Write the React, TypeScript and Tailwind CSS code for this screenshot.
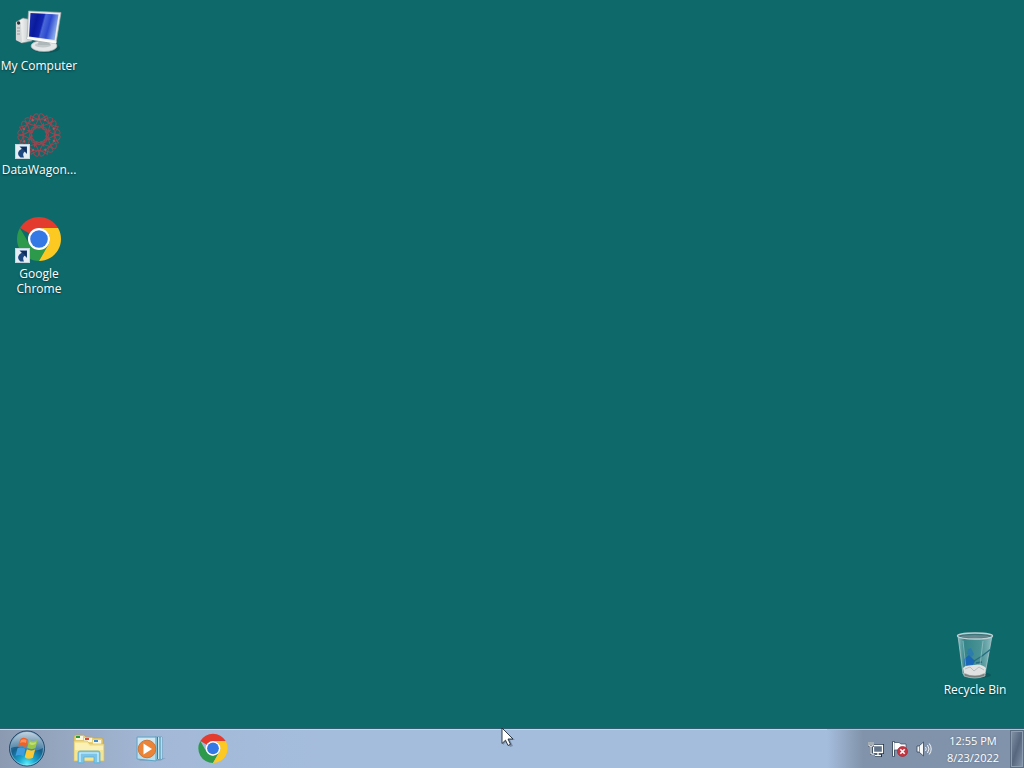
import type { ReactNode } from "react";

function ComputerIcon() {
  return (
    <svg viewBox="0 0 48 48" className="size-12" aria-hidden="true">
      <defs>
        <linearGradient id="pc-screen" x1="0" y1="0" x2="1" y2="0.25">
          <stop offset="0" stopColor="#1c2fae" />
          <stop offset="0.3" stopColor="#0a1a9c" />
          <stop offset="0.5" stopColor="#1226b4" />
          <stop offset="0.56" stopColor="#4a68d8" />
          <stop offset="0.75" stopColor="#2c49cf" />
          <stop offset="1" stopColor="#86a6ea" />
        </linearGradient>
        <linearGradient id="pc-tower" x1="0" y1="0" x2="1" y2="0">
          <stop offset="0" stopColor="#b5bbbd" />
          <stop offset="0.3" stopColor="#f2f3f2" />
          <stop offset="1" stopColor="#b9c0c2" />
        </linearGradient>
      </defs>
      <path d="M1 14 L8 10 L17 12 L17 33 L7 35 L1 32Z" fill="url(#pc-tower)" stroke="#7d8b8d" strokeWidth="0.6" />
      <path d="M1 14 L6 15 L7 35 L1 32Z" fill="#d5d8d8" />
      <circle cx="3.6" cy="15" r="1.7" fill="#27383b" />
      <path d="M2 20h3M2 23h3M2 26h3" stroke="#8c9699" strokeWidth="0.9" />
      <ellipse cx="31" cy="40" rx="14" ry="5" fill="#0a4548" opacity="0.5" />
      <ellipse cx="29" cy="38" rx="13" ry="5.500" fill="#e4e7e7" stroke="#a7b0b1" strokeWidth="0.7" />
      <ellipse cx="28" cy="37" rx="8" ry="2.600" fill="#c1c8ca" />
      <path d="M24 29h9l2 8H23z" fill="#aeb7b9" />
      <path d="M13.500 3 L46 4.500 L41 35.500 L12 31Z" fill="#e9ebea" stroke="#9fa9aa" strokeWidth="0.7" />
      <path d="M15.500 5 L43.500 6.500 L39.500 32 L14 28.500Z" fill="url(#pc-screen)" />
      <path d="M12 31 L41 35.500 L41.500 33.500 L12.500 29Z" fill="#fbfbfa" />
    </svg>
  );
}

function ShortcutArrow() {
  return (
    <svg viewBox="0 0 15 15" className="absolute bottom-px left-0 size-[15px]" aria-hidden="true">
      <rect x="0.5" y="0.5" width="14" height="14" fill="#e4edf3" stroke="#c5d5dd" />
      <path
        d="M4.500 2.500H12V10L9.800 7.800C7.800 9 7.800 11 9 13.500H5.500C1.800 10.500 2.600 7 6.800 4.800Z"
        fill="#1c477f"
      />
      <path d="M5.500 3H11.500V8.500L9.500 6.500L7.500 5Z" fill="#102e5b" />
    </svg>
  );
}

const petals = [0, 45, 90, 135, 180, 225, 270, 315];

function DataWagonIcon() {
  return (
    <svg viewBox="0 0 48 48" className="size-12" aria-hidden="true">
      <g fill="none" stroke="#c43c48" strokeWidth="0.9" opacity="0.8">
        {petals.map((angle) => (
          <g key={angle} transform={`rotate(${angle + 22} 24 23)`}>
            <path d="M24 13C20 10 16 7 17 3M24 13C28 10 32 7 31 3" />
            <path d="M17 3Q20 1 24 6Q28 1 31 3" />
            <path d="M13 11Q20 9 24 2Q28 9 35 11" />
            <path d="M17 18Q22 17 24 11Q26 17 31 18" />
            <path d="M20 14L28 14" />
            <circle cx="24" cy="7" r="0.7" fill="#e64c55" stroke="#e64c55" />
          </g>
        ))}
        <circle cx="24" cy="23" r="7" strokeDasharray="2 2" />
      </g>
    </svg>
  );
}

function ChromeIcon({ className }: { className: string }) {
  return (
    <svg viewBox="0 0 48 48" className={className} aria-hidden="true">
      <path d="M24 23 L4.950 12A22 22 0 0 1 43.050 12Z" fill="#e33b2e" />
      <path d="M4.950 12 L14.500 28.500A11 11 0 0 0 24 34 L33.500 28.500 L24 45A22 22 0 0 1 4.950 12Z" fill="#2d994a" />
      <path d="M43.050 12H24A11 11 0 0 1 33.500 28.500L24 45A22 22 0 0 0 43.050 12Z" fill="#fcc822" />
      <circle cx="24" cy="23" r="11" fill="#fff" />
      <circle cx="24" cy="23" r="8.800" fill="#3478e6" />
    </svg>
  );
}

function RecycleBinIcon() {
  return (
    <svg viewBox="0 0 48 48" className="size-12" aria-hidden="true">
      <defs>
        <linearGradient id="bin-glass" x1="0" y1="0" x2="1" y2="0">
          <stop offset="0" stopColor="#b8d6da" stopOpacity="0.75" />
          <stop offset="0.2" stopColor="#4e989d" stopOpacity="0.6" />
          <stop offset="0.65" stopColor="#70adb0" stopOpacity="0.6" />
          <stop offset="1" stopColor="#b9dadd" stopOpacity="0.75" />
        </linearGradient>
      </defs>
      <ellipse cx="28" cy="43" rx="12" ry="3" fill="#073d41" opacity="0.4" />
      <path d="M7 4L12 42Q23 47 34 42L41 4Z" fill="url(#bin-glass)" stroke="#a9c6ca" strokeWidth="0.8" />
      <path d="M12 36Q17 31 23 33Q30 31 35 36L34 41Q24 46 13 41Z" fill="#dfe2e1" />
      <path d="M14 37L19 35L23 39L28 35L33 38" fill="none" stroke="#b4bfc1" />
      <path d="M17 17l3-1 3 6-2 3-5-3z" fill="#2878b6" opacity="0.75" />
      <path d="M13 27l5-4 6 6-2 4-8 1z" fill="#1763bb" opacity="0.9" />
      <path d="M23 29l8-5 9-7M25 31l6-1" fill="none" stroke="#266d81" strokeWidth="1.400" />
      <path d="M12 9L15 36M32 9L29 33" stroke="#d4e9eb" strokeWidth="0.8" opacity="0.5" />
      <path d="M13 41Q24 46 34 41L34 44Q24 48 13 44Z" fill="#7b817e" stroke="#d9dddc" strokeWidth="0.6" />
      <ellipse cx="24" cy="4" rx="17.500" ry="3" fill="#3d7479" stroke="#bdd0d4" strokeWidth="1.400" />
      <ellipse cx="24" cy="4.500" rx="14" ry="1.500" fill="#65898e" />
    </svg>
  );
}

function StartOrb() {
  return (
    <svg viewBox="0 0 38 38" className="size-[38px]" aria-hidden="true">
      <defs>
        <radialGradient id="orb" cx="0.5" cy="0.95" r="0.9">
          <stop offset="0" stopColor="#5af0fc" />
          <stop offset="0.28" stopColor="#1aa3cc" />
          <stop offset="0.6" stopColor="#16608c" />
          <stop offset="1" stopColor="#557b9c" />
        </radialGradient>
        <linearGradient id="orb-shine" x1="0" y1="0" x2="0" y2="1">
          <stop offset="0" stopColor="#e6eff6" stopOpacity="0.75" />
          <stop offset="1" stopColor="#a5c0d4" stopOpacity="0.3" />
        </linearGradient>
      </defs>
      <circle cx="19" cy="18.500" r="17.500" fill="url(#orb)" stroke="#24496a" />
      <path d="M3 18A16 16 0 0 1 35 18Q27 23 19 19Q10 15 3 18Z" fill="url(#orb-shine)" />
      <path d="M12.500 9Q16 6.500 20 9.500L18 17.500Q14 14.500 10 16.500Z" fill="#ee6128" />
      <path d="M21.200 10Q25 12 29.500 10L27.500 18Q23 20 19.200 17.800Z" fill="#9bc844" />
      <path d="M9.600 18Q13.500 16 17.600 18.800L15.500 26.500Q11.500 24 7.500 26Z" fill="#3f9ddf" />
      <path d="M18.800 19.300Q23 21.500 27.100 19.500L25 27.700Q20.500 30 16.700 27.200Z" fill="#fbc936" />
      <path d="M13 10Q16 8.500 18.500 10L18 13Q15 11.500 12 13Z" fill="#ffb07d" opacity="0.6" />
      <path d="M22 12Q25 13.500 28 12L27.500 14Q24 16 21.500 14Z" fill="#dcec9b" opacity="0.6" />
      <circle cx="19" cy="18.500" r="16.500" fill="none" stroke="#bbdced" strokeOpacity="0.5" />
    </svg>
  );
}

function ExplorerIcon() {
  return (
    <svg viewBox="0 0 34 32" className="h-8 w-[34px]" aria-hidden="true">
      <path d="M2 6V4q0-2 2-2h8l2 2h6l2 1h7q2 0 2 2v19H2z" fill="#e9cf75" stroke="#c5a34d" strokeWidth="0.7" />
      <path d="M4 3h7v4H4zM12 5h8v4h-8zM21 7h8v4h-8z" fill="#f9f7df" />
      <path d="M4 3h4v2H4z" fill="#299d32" />
      <path d="M13 5h4v2h-4z" fill="#d94c37" />
      <path d="M22 7h4v2h-4z" fill="#3c8bd4" />
      <path d="M2 8h13l3 3h14v17H2z" fill="#f4e595" stroke="#d5bb68" strokeWidth="0.7" />
      <path d="M3 10h12l3 3h13v4H3z" fill="#fbf0b5" />
      <path d="M6 30V20q0-2 2-2h18q2 0 2 2v10h-6v-6H12v6z" fill="#7cc4e8" stroke="#5faed2" strokeWidth="0.8" />
      <path d="M8 29V20h18v9" fill="none" stroke="#d8f3fc" strokeWidth="1.200" />
    </svg>
  );
}

function MediaPlayerIcon() {
  return (
    <svg viewBox="0 0 32 28" className="h-7 w-8" aria-hidden="true">
      <path d="M22 23h9l-6 3H5l-2-2z" fill="#6c89ab" opacity="0.4" />
      <path d="M20 2h7v22l-7 1z" fill="#a0d4e9" stroke="#4c96b9" strokeWidth="0.7" />
      <path d="M22.500 2v22M25 2v22" stroke="#31809f" />
      <path d="M23.700 2v22M26.300 2v22" stroke="#d6eff7" strokeWidth="0.8" />
      <path d="M2 2h19v24L2 24z" fill="#b8dfef" stroke="#5fa5c4" />
      <path d="M3 3h17v9L3 19z" fill="#d5ebf4" opacity="0.7" />
      <circle cx="12" cy="14" r="8.800" fill="#ec8438" stroke="#c8773c" />
      <path d="M8.500 8.500v11l8.500-5.500z" fill="#fff" />
    </svg>
  );
}

function NetworkIcon() {
  return (
    <svg viewBox="0 0 16 16" className="size-4" aria-hidden="true">
      <path d="M5.500 4.500h9v7h-9zM10 12v2M7 14.500h7" fill="none" stroke="#203247" strokeWidth="3" />
      <path d="M5.500 4.500h9v7h-9z" fill="#617389" stroke="#fff" strokeWidth="1.300" />
      <path d="M10 12v2M7 14.500h6" fill="none" stroke="#fff" strokeWidth="1.300" />
      <path d="M0 1h6v5H4v8H2V6H0z" fill="#203247" />
      <path d="M1 1v4h4V1M3 1v3M3 5v8h3" fill="none" stroke="#fff" strokeWidth="1.200" />
    </svg>
  );
}

function ActionCenterIcon() {
  return (
    <svg viewBox="0 0 16 16" className="size-4" aria-hidden="true">
      <path d="M1.500 0.500v15" stroke="#26384c" strokeWidth="3" />
      <path d="M2 1.500h5l2 1.500h5v7H9L7 9H2z" fill="#fff" stroke="#33465b" strokeWidth="0.7" />
      <path d="M1.500 1v14" stroke="#fff" strokeWidth="1.300" />
      <circle cx="10.500" cy="10.500" r="5" fill="#cb3540" stroke="#902c38" strokeWidth="0.7" />
      <path d="M8.300 8.300l4.400 4.400m0-4.400l-4.400 4.400" stroke="#fff" strokeWidth="1.600" />
    </svg>
  );
}

function VolumeIcon() {
  return (
    <svg viewBox="0 0 16 16" className="size-4" aria-hidden="true">
      <path d="M1 5h2l4.500-4v14L3 11H1z" fill="#f6f8fa" stroke="#34485e" strokeWidth="0.8" />
      <path d="M3.500 5v6" stroke="#8393a6" />
      <path d="M9.500 6q1.500 2 0 4M11.500 4q3 4 0 8M13.200 2.500q4 5.500 0 11" fill="none" stroke="#f4f7fb" strokeWidth="1" />
    </svg>
  );
}

type DesktopItemProps = { label: string; shortcut?: boolean; children: ReactNode };

function DesktopItem({ label, shortcut = false, children }: DesktopItemProps) {
  return (
    <button
      type="button"
      className="flex h-[104px] w-[78px] flex-col items-center gap-[2px] pt-2 text-center text-[12px] leading-[15px] text-white [text-shadow:0_1px_2px_rgba(0,0,0,0.5)]"
    >
      <span className="relative block size-12">
        {children}
        {shortcut && <ShortcutArrow />}
      </span>
      <span>{label}</span>
    </button>
  );
}

function TaskButton({ label, children }: { label: string; children: ReactNode }) {
  return (
    <button type="button" aria-label={label} className="flex w-[62px] items-center justify-center">
      {children}
    </button>
  );
}

function TrayButton({ label, children }: { label: string; children: ReactNode }) {
  return (
    <button type="button" aria-label={label} className="flex w-6 items-center justify-center">
      {children}
    </button>
  );
}

function Taskbar() {
  return (
    <footer className="flex h-10 border-t border-[#2f5f70] bg-[#a5bcdb]">
      <nav
        aria-label="Taskbar"
        className="flex flex-1 border-t border-[#c6d5e8] bg-linear-to-r from-[#8c9ab1] via-[#a3b8d6] via-[150px] to-[#a5bddd] to-[320px]"
      >
        <button type="button" aria-label="Start" className="flex w-[58px] items-center pl-2">
          <StartOrb />
        </button>
        <TaskButton label="Windows Explorer">
          <ExplorerIcon />
        </TaskButton>
        <TaskButton label="Windows Media Player">
          <MediaPlayerIcon />
        </TaskButton>
        <TaskButton label="Google Chrome">
          <ChromeIcon className="size-8" />
        </TaskButton>
      </nav>
      <div className="flex border-t border-[#b4c2d3] bg-linear-to-r from-[#a5bddd] to-[#8193aa] to-[36px] pl-[37px]">
        <TrayButton label="Network">
          <NetworkIcon />
        </TrayButton>
        <TrayButton label="Action Center">
          <ActionCenterIcon />
        </TrayButton>
        <TrayButton label="Volume">
          <VolumeIcon />
        </TrayButton>
        <button
          type="button"
          className="flex w-[74px] flex-col items-center justify-center text-[11px] leading-[17px] text-white [text-shadow:0_0_2px_rgba(30,50,75,0.4)]"
        >
          <time dateTime="12:55">12:55 PM</time>
          <time dateTime="2022-08-23">8/23/2022</time>
        </button>
        <button
          type="button"
          aria-label="Show desktop"
          className="w-[14px] border border-[#5c6d82] bg-linear-to-br from-[#8594a8] via-[#56677e] to-[#8797ac] shadow-[inset_0_0_0_1px_#8e9eb2]"
        />
      </div>
    </footer>
  );
}

function Pointer() {
  return (
    <svg viewBox="0 0 14 22" className="pointer-events-none absolute top-[727px] left-[501px] h-[22px] w-[14px]" aria-hidden="true">
      <path d="M2 3v15l4-4 3 6 3-1-3-6h5z" fill="#34455b" opacity="0.4" />
      <path d="M1 1v15.500l3.500-3.300L7 18.500l2.500-1.200-2.500-5.300h5z" fill="#fff" stroke="#1c2939" strokeWidth="0.9" />
    </svg>
  );
}

export default function App() {
  return (
    <div className="relative flex min-h-screen flex-col bg-[#0e696b] font-['Open_Sans','Noto_Sans',sans-serif]">
      <main className="flex flex-1 justify-between">
        <div className="flex flex-col">
          <DesktopItem label="My Computer">
            <ComputerIcon />
          </DesktopItem>
          <DesktopItem label="DataWagon..." shortcut>
            <DataWagonIcon />
          </DesktopItem>
          <DesktopItem label="Google Chrome" shortcut>
            <ChromeIcon className="size-12" />
          </DesktopItem>
        </div>
        <div className="flex flex-col justify-end pr-[10px]">
          <DesktopItem label="Recycle Bin">
            <RecycleBinIcon />
          </DesktopItem>
        </div>
      </main>
      <Taskbar />
      <Pointer />
    </div>
  );
}
